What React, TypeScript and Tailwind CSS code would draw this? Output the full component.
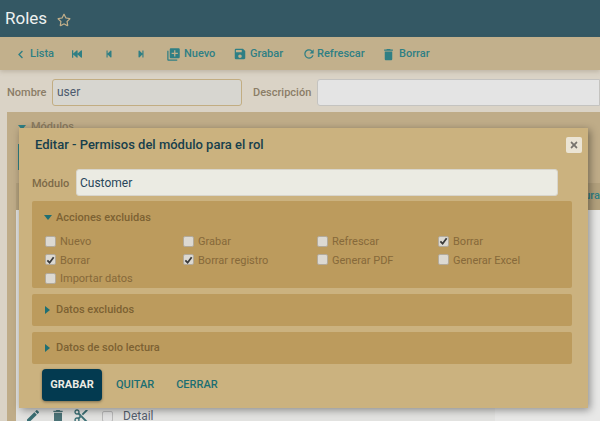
import React from "react";
import { FaRegStar, FaStepBackward, FaFastBackward, FaStepForward, FaTimes, FaChevronLeft } from "react-icons/fa";
import { MdLibraryAdd, MdRefresh, MdSave, MdDelete, MdEdit, MdContentCut } from "react-icons/md";

const font = { fontFamily: "Roboto, sans-serif" };

function Tool({ icon, label, w }: { icon: React.ReactNode; label?: string; w: string }) {
  return (
    <div className={`flex items-center ${w} text-[11px] font-medium text-[#2f7f84]`}>
      {icon}
      {label && <span>{label}</span>}
    </div>
  );
}

function Check({ label, checked, w }: { label: string; checked?: boolean; w: string }) {
  return (
    <div className={`flex h-[18.5px] items-center ${w}`}>
      <span className="mr-[4px] flex h-[11px] w-[11px] shrink-0 -translate-y-[1px] items-center justify-center rounded-[2px] border border-[#b3aa9a] bg-[#dcd9d2]">
        {checked && (
          <svg viewBox="0 0 10 10" className="h-[10px] w-[10px]">
            <path d="M1.5 5.5 L4 8 L8.5 2" fill="none" stroke="#3a3a3a" strokeWidth="2" />
          </svg>
        )}
      </span>
      <span className="text-[11px] text-[#86693a]">{label}</span>
    </div>
  );
}

function Section({ title, open, children }: { title: string; open?: boolean; children?: React.ReactNode }) {
  return (
    <div className={`rounded-[2px] bg-[#bc9b5d] pl-[11px] ${open ? "" : "h-[32px]"}`}>
      <div className={`flex items-center ${open ? "h-[32px] pt-[3px]" : "h-[32px] pt-[1px]"}`}>
        {open ? (
          <span className="ml-[1px] mr-[4px] h-0 w-0 -translate-y-[1px] border-x-[4.5px] border-t-[5px] border-x-transparent border-t-[#1f6f73]" />
        ) : (
          <span className="ml-[2px] mr-[6px] h-0 w-0 -translate-y-[1px] border-y-[4px] border-l-[5px] border-y-transparent border-l-[#1f6f73]" />
        )}
        <span className="text-[11px] font-medium text-[#7d6233]">{title}</span>
      </div>
      {children}
    </div>
  );
}

export default function App() {
  return (
    <div className="relative flex h-[421px] w-[600px] flex-col overflow-hidden bg-[#dad3c6]" style={font}>
      <header className="flex h-[37px] shrink-0 items-center bg-[#345864] pl-[5px]">
        <span className="text-[17px] text-[#eef1f0]">Roles</span>
        <FaRegStar className="ml-[10px] translate-y-[1px] text-[14px] text-[#c4b08a]" />
      </header>
      <div className="relative z-10 flex h-[33px] shrink-0 items-center bg-[#c2b08c] pl-[16px] pt-[1px] shadow-[0_2px_4px_rgba(120,105,75,0.25)]">
        <Tool w="w-[56px]" icon={<FaChevronLeft className="mr-[5px] text-[9px]" />} label="Lista" />
        <Tool w="w-[33px]" icon={<FaFastBackward className="text-[10px]" />} />
        <Tool w="w-[32px]" icon={<FaStepBackward className="text-[8px]" />} />
        <Tool w="w-[29px]" icon={<FaStepForward className="text-[8px]" />} />
        <Tool w="w-[67px]" icon={<MdLibraryAdd className="mr-[3px] text-[15px]" />} label="Nuevo" />
        <Tool w="w-[69px]" icon={<MdSave className="mr-[3px] text-[14px]" />} label="Grabar" />
        <Tool w="w-[79px]" icon={<MdRefresh className="mr-[1px] text-[14px]" />} label="Refrescar" />
        <Tool w="w-[60px]" icon={<MdDelete className="mr-[3px] text-[15px]" />} label="Borrar" />
      </div>
      <div className="flex h-[42px] shrink-0 items-center pl-[7px] pt-[2px]">
        <span className="w-[45px] translate-y-[1px] text-[11px] font-medium text-[#8b7d66]">Nombre</span>
        <div className="flex h-[27px] w-[190px] items-center rounded-[3px] border border-[#c2ad82] bg-[#d7d6d0] pl-[4px] text-[12px] text-[#4c5a6e]">user</div>
        <span className="ml-[11px] w-[64px] translate-y-[1px] text-[11px] font-medium text-[#8b7d66]">Descripción</span>
        <div className="h-[27px] flex-1 rounded-l-[3px] border border-[#c4c3c0] bg-[#e4e4e4]" />
      </div>
      <div className="ml-[7px] flex min-h-0 flex-1 flex-col bg-[#bfac88] pl-[9px] pt-[8px]">
        <div className="ml-[2px] flex h-[14px] shrink-0 items-center gap-[5px] text-[11px] font-medium text-[#8a7a5e]">
          <span className="h-0 w-0 border-x-[4px] border-t-[5px] border-x-transparent border-t-[#2f7f84]" />
          Módulos
        </div>
        <div className="ml-[2px] mt-[10px] h-[26px] w-[2px] shrink-0 bg-[#2f7f84]" />
        <div className="mt-[13px] flex h-[27px] shrink-0 items-center justify-end bg-[#b3a17d] text-[11px] font-medium text-[#2f7f84]">Estructura</div>
        <div className="flex min-h-0 flex-1">
          <div className="flex flex-1 flex-col justify-end bg-[#e2e2e0] pl-[9px]">
            <div className="-mb-[5px] flex h-[20px] shrink-0 items-center text-[#3a6f74]">
              <MdEdit className="text-[16px]" />
              <MdDelete className="ml-[9px] text-[16px] text-[#4a7276]" />
              <MdContentCut className="ml-[7px] text-[16px]" />
              <span className="ml-[13px] h-[11px] w-[11px] rounded-[2px] border border-[#b9b9b9] bg-[#e2e2e2]" />
              <span className="ml-[10px] text-[12px] text-[#56606e]">Detail</span>
            </div>
          </div>
          <div className="w-[105px] bg-[#e8e8e7]" />
        </div>
      </div>

      <div className="absolute left-[19px] top-[128px] z-20 h-[280px] w-[569px] bg-[#cbb27f] pl-[13px] pr-[16px] shadow-[2px_2px_8px_rgba(0,0,0,0.4)]">
        <div className="flex h-[34px] items-center justify-between pl-[3px]">
          <span className="text-[13px] font-medium text-[#173f4c]">Editar - Permisos del módulo para el rol</span>
          <span className="-mr-[10px] flex h-[16px] w-[16px] items-center justify-center rounded-[2px] bg-[#ebe4d4] text-[#77736d]">
            <FaTimes className="text-[10px]" />
          </span>
        </div>
        <div className="mt-[7px] flex h-[27px] items-center">
          <span className="w-[44px] translate-y-[2px] text-[11px] font-medium text-[#7d6a48]">Módulo</span>
          <div className="flex h-[27px] w-[482px] items-center rounded-[3px] border border-[#d8d5cc] bg-[#ebebe3] pl-[3px] text-[12px] text-[#28465a]">Customer</div>
        </div>
        <div className="mt-[5px] flex flex-col gap-[6px]">
          <Section title="Acciones excluidas" open>
            <div className="flex h-[18.5px] pl-[2px]">
              <Check w="w-[138px]" label="Nuevo" />
              <Check w="w-[134px]" label="Grabar" />
              <Check w="w-[121px]" label="Refrescar" />
              <Check w="w-auto" label="Borrar" checked />
            </div>
            <div className="flex h-[18.5px] pl-[2px]">
              <Check w="w-[138px]" label="Borrar" checked />
              <Check w="w-[134px]" label="Borrar registro" checked />
              <Check w="w-[121px]" label="Generar PDF" />
              <Check w="w-auto" label="Generar Excel" />
            </div>
            <div className="flex h-[18px] items-start pl-[2px]">
              <Check w="w-[138px]" label="Importar datos" />
            </div>
          </Section>
          <Section title="Datos excluidos" />
          <Section title="Datos de solo lectura" />
        </div>
        <div className="mt-[5px] flex items-center">
          <span className="ml-[10px] flex h-[32px] w-[60px] items-center justify-center rounded-[4px] bg-[#033a50] text-[11px] font-bold text-[#ecebe4] shadow-[0_1px_3px_rgba(0,0,0,0.4)]">GRABAR</span>
          <span className="ml-[14px] text-[11px] font-medium text-[#1b6e72]">QUITAR</span>
          <span className="ml-[22px] text-[11px] font-medium text-[#1b6e72]">CERRAR</span>
        </div>
      </div>
    </div>
  );
}
